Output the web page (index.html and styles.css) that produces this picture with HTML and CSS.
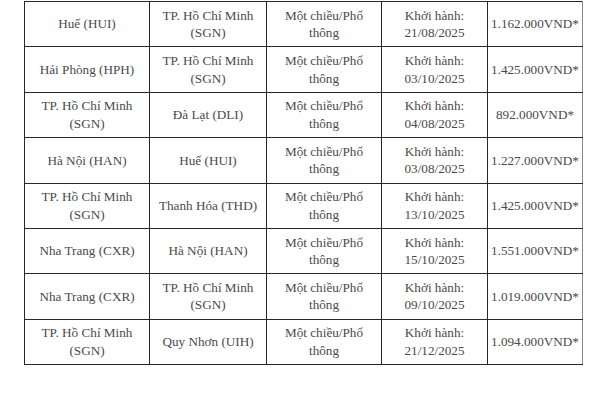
FILE: index.html
```html
<!DOCTYPE html>
<html lang="vi">
<head>
<meta charset="utf-8">
<title>Vé máy bay</title>
<link rel="stylesheet" href="styles.css">
</head>
<body>
<div class="wrap">
<table class="fares">
<colgroup>
<col class="c1"><col class="c2"><col class="c3"><col class="c4"><col class="c5">
</colgroup>
<tbody>
<tr><td>Huế (HUI)</td><td>TP. Hồ Chí Minh (SGN)</td><td>Một chiều/Phổ thông</td><td>Khởi hành: 21/08/2025</td><td>1.162.000VND*</td></tr>
<tr><td>Hải Phòng (HPH)</td><td>TP. Hồ Chí Minh (SGN)</td><td>Một chiều/Phổ thông</td><td>Khởi hành: 03/10/2025</td><td>1.425.000VND*</td></tr>
<tr><td>TP. Hồ Chí Minh (SGN)</td><td>Đà Lạt (DLI)</td><td>Một chiều/Phổ thông</td><td>Khởi hành: 04/08/2025</td><td>892.000VND*</td></tr>
<tr><td>Hà Nội (HAN)</td><td>Huế (HUI)</td><td>Một chiều/Phổ thông</td><td>Khởi hành: 03/08/2025</td><td>1.227.000VND*</td></tr>
<tr><td>TP. Hồ Chí Minh (SGN)</td><td>Thanh Hóa (THD)</td><td>Một chiều/Phổ thông</td><td>Khởi hành: 13/10/2025</td><td>1.425.000VND*</td></tr>
<tr><td>Nha Trang (CXR)</td><td>Hà Nội (HAN)</td><td>Một chiều/Phổ thông</td><td>Khởi hành: 15/10/2025</td><td>1.551.000VND*</td></tr>
<tr><td>Nha Trang (CXR)</td><td>TP. Hồ Chí Minh (SGN)</td><td>Một chiều/Phổ thông</td><td>Khởi hành: 09/10/2025</td><td>1.019.000VND*</td></tr>
<tr><td>TP. Hồ Chí Minh (SGN)</td><td>Quy Nhơn (UIH)</td><td>Một chiều/Phổ thông</td><td>Khởi hành: 21/12/2025</td><td>1.094.000VND*</td></tr>
</tbody>
</table>
</div>
</body>
</html>
```

FILE: styles.css
```css
html, body {
  margin: 0;
  padding: 0;
  background: #ffffff;
}

.wrap {
  padding: 1px 0 0 24px;
}

.fares {
  border-collapse: collapse;
  table-layout: fixed;
  width: 558px;
  font-family: "Liberation Serif", "Times New Roman", serif;
  font-size: 13.2px;
  line-height: 17.5px;
  color: #4a4a4a;
}

.c1 { width: 125px; }
.c2 { width: 117px; }
.c3 { width: 115px; }
.c4 { width: 106px; }
.c5 { width: 95px; }

.fares td {
  border: 1.5px solid #262626;
  text-align: center;
  vertical-align: middle;
  padding: 4.7px 2px;
  height: 35px;
}

.fares td:last-child {
  border-right-color: #8a8a8a;
}
```
